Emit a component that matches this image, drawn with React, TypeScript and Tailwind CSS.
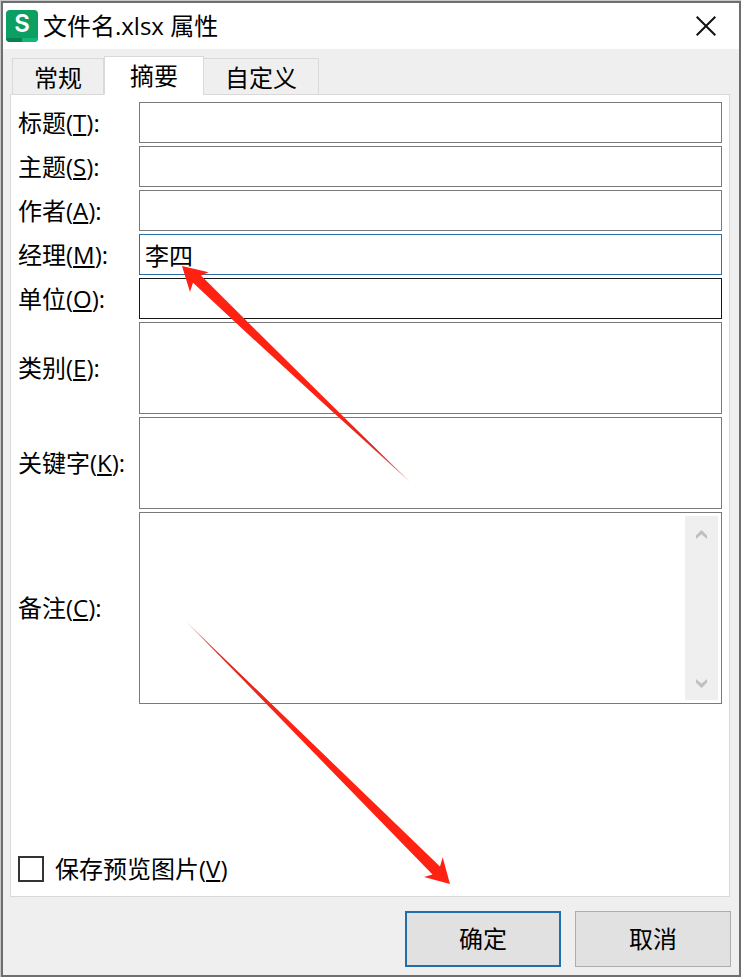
import { useState } from "react";
import clsx from "clsx";

const tabs = ["常规", "摘要", "自定义"];

const fields = [
  { id: "title", label: "标题", hotkey: "T", border: "border-[#7a7a7a]" },
  { id: "subject", label: "主题", hotkey: "S", border: "border-[#7a7a7a]" },
  { id: "author", label: "作者", hotkey: "A", border: "border-[#7a7a7a]" },
  { id: "manager", label: "经理", hotkey: "M", border: "border-[#2a6fa8]", value: "李四" },
  { id: "company", label: "单位", hotkey: "O", border: "border-[#171717]" },
];

const areas = [
  { id: "category", label: "类别", hotkey: "E" },
  { id: "keywords", label: "关键字", hotkey: "K" },
];

function Hotkey({ children }: any) {
  return (
    <>
      (<span className="underline decoration-2 underline-offset-2 [text-decoration-skip-ink:none]">{children}</span>)
    </>
  );
}

function Row({ id, label, hotkey, children }: any) {
  return (
    <div className="flex items-center">
      <label htmlFor={id} className="w-[121px] shrink-0 whitespace-nowrap">
        {label}
        <Hotkey>{hotkey}</Hotkey>:
      </label>
      {children}
    </div>
  );
}

function Logo() {
  return (
    <div className="flex h-8 w-8 flex-col rounded-sm bg-[#0c9f64]">
      <span className="h-7 text-center font-[Inter] text-2xl leading-7 font-semibold text-white">S</span>
      <div className="flex h-1">
        <div className="w-1/2 rounded-bl-sm bg-[#0a7f50]" />
        <div className="w-1/2 rounded-br-sm bg-[#12b675]" />
      </div>
    </div>
  );
}

function Chevron({ d }: any) {
  return (
    <svg width="11" height="9" viewBox="0 0 11 9" fill="#bfbfbf">
      <path d={d} />
    </svg>
  );
}

function Scrollbar() {
  return (
    <div className="m-[3px] flex w-[33px] shrink-0 flex-col justify-between bg-[#efefef]">
      <button type="button" aria-label="向上滚动" className="flex h-9 items-center justify-center">
        <Chevron d="M5.5 0 11 5.5V9L5.5 4.2 0 9V5.5Z" />
      </button>
      <button type="button" aria-label="向下滚动" className="flex h-[33px] items-center justify-center">
        <Chevron d="M5.5 9 11 3.5V0L5.5 4.8 0 0V3.5Z" />
      </button>
    </div>
  );
}

function Arrows() {
  return (
    <svg width="460" height="900" viewBox="0 0 460 900" aria-hidden="true">
      <defs>
        <linearGradient id="fadeUp" gradientUnits="userSpaceOnUse" x1="182" y1="266" x2="408" y2="480">
          <stop offset="0.6" stopColor="#ff2213" />
          <stop offset="0.85" stopColor="#d92c20" />
          <stop offset="1" stopColor="#d92c20" stopOpacity="0.7" />
        </linearGradient>
        <linearGradient id="fadeDown" gradientUnits="userSpaceOnUse" x1="450" y1="884" x2="187" y2="622">
          <stop offset="0.6" stopColor="#ff2213" />
          <stop offset="0.85" stopColor="#d92c20" />
          <stop offset="1" stopColor="#d92c20" stopOpacity="0.7" />
        </linearGradient>
      </defs>
      <path fill="url(#fadeUp)" d="M182 266 208.7 272.3 201 275.5Q306 380 410 482Q300 383 193 282.7L190 292Z" />
      <path fill="url(#fadeDown)" d="M450 884 442.7 857.3 440 866.5 186 621.5 432.5 874.5 424 877Z" />
    </svg>
  );
}

export default function App() {
  const [active, setActive] = useState("摘要");

  return (
    <div className="flex min-h-screen flex-col bg-[#c6c8c7] pt-px pl-px font-['Open_Sans','Noto_Sans_CJK_SC',sans-serif] text-2xl leading-8 text-black">
      <div className="relative flex grow flex-col border-2 border-[#6e6e6e] bg-[#efefef]">
        <header className="flex h-[46px] items-center justify-between bg-white pr-[23px] pl-[3px]">
          <div className="flex items-center gap-[5px]">
            <Logo />
            <h1>文件名.xlsx 属性</h1>
          </div>
          <button type="button" aria-label="关闭">
            <svg className="block" width="20" height="20" viewBox="0 0 20 20" stroke="#111" strokeWidth="2">
              <path d="M0.7 0.7 19.3 19.3M19.3 0.7 0.7 19.3" />
            </svg>
          </button>
        </header>

        <main className="flex grow flex-col pt-[7px] pr-[9px] pl-[7px]">
          <div role="tablist" className="z-10 -mb-px flex items-end pl-0.5">
            {tabs.map((tab) => (
              <button
                key={tab}
                type="button"
                role="tab"
                aria-selected={tab === active}
                onClick={() => setActive(tab)}
                className={clsx(
                  "border border-[#d9d9d9]",
                  tab === active
                    ? "-mr-px h-[39px] border-b-white bg-white px-[25px]"
                    : "h-[37px] bg-[#efefef] px-[21px] pt-0.5"
                )}
              >
                {tab}
              </button>
            ))}
          </div>

          <form className="flex grow flex-col gap-[3px] border border-[#d9d9d9] bg-white p-[7px]">
            {fields.map((f) => (
              <Row key={f.id} {...f}>
                <input
                  id={f.id}
                  type="text"
                  defaultValue={f.value}
                  className={clsx("h-[41px] min-w-0 grow border bg-white px-[5px] outline-none", f.border)}
                />
              </Row>
            ))}
            {areas.map((a) => (
              <Row key={a.id} {...a}>
                <textarea id={a.id} className="h-[92px] min-w-0 grow resize-none border border-[#7a7a7a] bg-white px-[5px] outline-none" />
              </Row>
            ))}
            <Row id="comments" label="备注" hotkey="C">
              <div className="flex h-48 min-w-0 grow border border-[#7a7a7a] bg-white">
                <textarea id="comments" className="min-w-0 grow resize-none px-[5px] outline-none" />
                <Scrollbar />
              </div>
            </Row>
            <div className="mt-auto mb-1 flex items-center gap-[11px]">
              <input id="preview" type="checkbox" className="h-[26px] w-[26px] appearance-none border-2 border-[#333] bg-white checked:bg-[#333]" />
              <label htmlFor="preview">
                保存预览图片<Hotkey>V</Hotkey>
              </label>
            </div>
          </form>
        </main>

        <footer className="flex justify-end gap-3.5 pt-3.5 pr-2 pb-2">
          <button type="button" className="h-14 w-[156px] border-2 border-[#1f6fae] bg-[#e1e1e1]">
            确定
          </button>
          <button type="button" className="h-14 w-[156px] border border-[#adadad] bg-[#e1e1e1]">
            取消
          </button>
        </footer>

        {/* svg is laid out from the window corner, inside the 3px frame */}
        <div className="pointer-events-none absolute -top-[3px] -left-[3px]">
          <Arrows />
        </div>
      </div>
    </div>
  );
}
